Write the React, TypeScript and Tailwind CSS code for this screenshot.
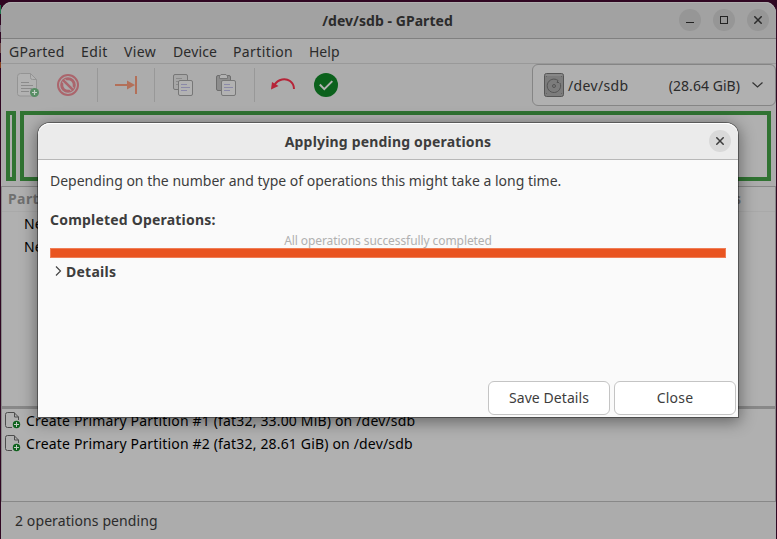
import React from "react";

const menus = [
  { label: "GParted", css: "w-[72px] tracking-[0.25px]" },
  { label: "Edit", css: "w-[43px] tracking-[0.4px]" },
  { label: "View", css: "w-[49px] tracking-[0.4px]" },
  { label: "Device", css: "w-[60px] tracking-[0.15px]" },
  { label: "Partition", css: "w-[76px] tracking-[0.4px]" },
  { label: "Help", css: "w-[40px] tracking-[0px]" },
];

const operations = [
  "Create Primary Partition #1 (fat32, 33.00 MiB) on /dev/sdb",
  "Create Primary Partition #2 (fat32, 28.61 GiB) on /dev/sdb",
];

function NewIcon() {
  return (
    <svg width="24" height="24" viewBox="0 0 24 24" fill="none" className="shrink-0">
      <path d="M3.500.5h10l6 6v14a2.500 2.500 0 0 1-2.500 2.500H3a2.500 2.500 0 0 1-2.500-2.500V3.500A3 3 0 0 1 3.500.5Z" transform="translate(1 0)" fill="#b2b2b2" stroke="#949494" />
      <path d="M14.500.5v4a2 2 0 0 0 2 2h4" stroke="#949494" />
      <path d="M5 9.500h8M5 12.500h12M5 15.500h11M5 18.500h8" stroke="#8b8b8b" />
      <circle cx="18.500" cy="19.500" r="4.500" fill="#578d64" />
      <path d="M18.500 17v5M16 19.500h5" stroke="#c4d0c6" strokeWidth="1.200" />
    </svg>
  );
}

function ForbiddenIcon() {
  return (
    <svg width="22" height="22" viewBox="0 0 22 22" fill="none" className="shrink-0">
      <circle cx="11" cy="11" r="10" stroke="#ab656c" strokeWidth="2" />
      <circle cx="11" cy="11" r="6.300" stroke="#ab656c" strokeWidth="3" />
      <path d="M6.500 6.500l9 9" stroke="#acacac" strokeWidth="4.500" />
      <path d="M5.800 5.800l10.400 10.400" stroke="#ab656c" strokeWidth="2.500" />
    </svg>
  );
}

function MoveIcon() {
  return (
    <svg width="22" height="18" viewBox="0 0 22 18" className="shrink-0" fill="#b37059">
      <path d="M0 8h12V4.500l8 4.500-8 4.500V10H0ZM20 0h2v18h-2Z" />
    </svg>
  );
}

function PageFront() {
  return (
    <>
      <rect x="5.500" y="6.500" width="14" height="15" rx="1.500" fill="#b2b2b2" stroke="#777" />
      <path d="M8 10.500h6M8 13.500h9M8 16.500h6" stroke="#8b89a8" />
    </>
  );
}

function CopyIcon() {
  return (
    <svg width="20" height="22" viewBox="0 0 20 22" fill="none" className="shrink-0">
      <rect x=".5" y=".5" width="14" height="15" rx="1.500" fill="#a7a7a7" stroke="#777" />
      <path d="M3 4.500h6M3 7.500h7M3 10.500h2" stroke="#8b8b8b" />
      <PageFront />
    </svg>
  );
}

function PasteIcon() {
  return (
    <svg width="20" height="22" viewBox="0 0 20 22" fill="none" className="shrink-0">
      <rect x=".5" y="1.500" width="14" height="15" rx="1.500" fill="#8d8d8d" stroke="#6d6d6d" />
      <path d="M3.500 4.500h8V2l-1.500-1.500H5L3.500 2Z" fill="#b2b2b2" stroke="#777" />
      <PageFront />
    </svg>
  );
}

function UndoIcon() {
  return (
    <svg width="24" height="12" viewBox="0 0 24 12" fill="none" className="mb-[3px] shrink-0">
      <path d="M3.500 7C7 .4 15 0 19 3c2.600 1.900 4 4.400 4 8" stroke="#b62438" strokeWidth="2" />
      <path d="M0 11.500l1-7.500 6.500 4Z" fill="#b62438" />
    </svg>
  );
}

function ApplyIcon() {
  return (
    <svg width="24" height="24" viewBox="0 0 24 24" fill="none" className="shrink-0">
      <circle cx="12" cy="12" r="12" fill="#0b611c" />
      <path d="M5.800 11.500l4.500 4.600 8-8" stroke="#b2b2b2" strokeWidth="2" />
    </svg>
  );
}

function DiskIcon() {
  return (
    <svg width="20" height="24" viewBox="0 0 20 24" fill="none" className="shrink-0">
      <rect x=".5" y=".5" width="19" height="23" rx="2" fill="#7c7c7c" stroke="#555" />
      <path d="M1.500 2h17" stroke="#939393" />
      <path d="M14 7.500a6.700 6.700 0 1 0 2 2.500M14 7.500l-1 2h2" stroke="#545454" />
      <circle cx="10" cy="13" r="1.500" stroke="#545454" />
      <path d="M2.500 3v1M17.500 3v1M2.500 20v1M17.500 20v1" stroke="#656565" />
    </svg>
  );
}

function OperationIcon() {
  return (
    <svg width="16" height="17" viewBox="0 0 16 17" fill="none" className="shrink-0">
      <path d="M7 15.500H2.500a2 2 0 0 1-2-2v-11a2 2 0 0 1 2-2H9l4.500 4.500v3" stroke="#4c4c4c" />
      <path d="M9.500.5V5h4" stroke="#4c4c4c" />
      <circle cx="11.500" cy="12.500" r="3.700" fill="#0e621d" />
      <path d="M11.500 10v5M9 12.500h5" stroke="#c2ccc3" />
    </svg>
  );
}

function Separator({ css }: { css: string }) {
  return <div className={`h-[34px] w-px shrink-0 bg-[#989898] ${css}`} />;
}

function CloseGlyph() {
  return (
    <svg width="8" height="8" viewBox="0 0 8 8" stroke="currentColor" strokeWidth="1.500">
      <path d="M.3.3l7.400 7.400M7.700.3L.3 7.700" />
    </svg>
  );
}

function Dialog() {
  return (
    <div className="absolute left-[38px] top-[123px] flex h-[294px] w-[700px] flex-col rounded-t-[12px] bg-[#fafafa] text-[#3d3d3d] shadow-[0_0_0_1px_rgba(0,0,0,0.38),0_3px_16px_2px_rgba(0,0,0,0.42)]">
      <div className="flex h-[37px] shrink-0 items-center rounded-t-[12px] border-b border-[#b8b8b8] bg-[#ebebeb] pr-[7px] shadow-[inset_0_1px_#fff]">
        <h2 className="flex-1 whitespace-nowrap pl-[29px] text-center text-[14px] font-bold tracking-[0.18px]">
          Applying pending operations
        </h2>
        <button className="flex size-[22px] items-center justify-center rounded-full bg-[#d9d9d9]">
          <CloseGlyph />
        </button>
      </div>
      <div className="flex flex-1 flex-col px-[12px]">
        <p className="mt-[11px] h-5 whitespace-nowrap text-[14px] leading-5">
          <span>Depending on the number and type of operations this might take a long time.</span>
        </p>
        <p className="mt-[19px] h-5 whitespace-nowrap text-[14px] font-bold leading-5 tracking-[0.2px]">
          <span>Completed Operations:</span>
        </p>
        <p className="mt-[3px] h-[15px] whitespace-nowrap text-center text-[12px] leading-4 text-[#b0b0b0] tracking-[-0.08px]">
          <span>All operations successfully completed</span>
        </p>
        <div className="h-[10px] border border-[#ef7d55] bg-[#e95420]" />
        <div className="mt-[3px] flex h-5 items-center pl-[5px]">
          <svg width="7" height="10" viewBox="0 0 7 10" fill="none" stroke="#444">
            <path d="M1 .5L5.500 5 1 9.500" strokeWidth="1.200" />
          </svg>
          <span className="ml-[4px] text-[14px] font-bold tracking-[0.25px]">Details</span>
        </div>
      </div>
      <div className="flex justify-end gap-1 pb-[2px] pr-[2px] text-[14px]">
        <button className="h-[34px] w-[122px] rounded-[6px] border border-[#c4c4c4] bg-white pb-[2px]">
          <span className="tracking-[0.08px]">Save Details</span>
        </button>
        <button className="h-[34px] w-[122px] rounded-[6px] border border-[#c4c4c4] bg-white pb-[2px]">
          <span className="tracking-[0.2px]">Close</span>
        </button>
      </div>
    </div>
  );
}

export default function App() {
  return (
    <div className="relative flex h-[539px] w-[777px] overflow-hidden bg-[#300722] pt-[2px] font-['Noto_Sans',sans-serif] text-[14px] text-[#2b2b2b]">
      <div className="flex w-px shrink-0 flex-col">
        <i className="mt-[3px] h-[9px] bg-[#247650]" />
        <i className="mt-[11px] h-[7px] bg-[#77697a]" />
        <i className="mt-[11px] h-[10px] bg-[#74504f]" />
        <i className="mt-[9px] h-[6px] bg-[#8a3f1e]" />
      </div>
      <main className="flex w-[775px] shrink-0 flex-col rounded-t-[11px] bg-[#acacac]">
        <header className="flex h-[37px] shrink-0 items-center gap-[12px] rounded-t-[11px] border-b border-[#808080] bg-[#a2a2a2] pr-[7px] shadow-[inset_0_1px_#b0b0b0]">
          <h1 className="flex-1 whitespace-nowrap pl-[107px] text-center font-bold tracking-[0.05px]">/dev/sdb - GParted</h1>
          <button className="flex size-[22px] items-center justify-center rounded-full bg-[#969696]">
            <span className="mt-[5px] h-px w-2 bg-[#222]" />
          </button>
          <button className="flex size-[22px] items-center justify-center rounded-full bg-[#969696]">
            <span className="size-2 border border-[#222]" />
          </button>
          <button className="flex size-[22px] items-center justify-center rounded-full bg-[#969696]">
            <CloseGlyph />
          </button>
        </header>
        <nav className="flex h-[25px] shrink-0 items-center border-b border-[#999] pl-[8px]">
          {menus.map((m) => (
            <span key={m.label} className={`shrink-0 whitespace-nowrap ${m.css}`}>
              {m.label}
            </span>
          ))}
        </nav>
        <div className="flex h-[42px] shrink-0 items-center pl-[15px]">
          <NewIcon />
          <span className="w-[17px]" />
          <ForbiddenIcon />
          <Separator css="ml-[18px]" />
          <span className="w-[17px]" />
          <MoveIcon />
          <Separator css="ml-[17px]" />
          <span className="w-[18px]" />
          <CopyIcon />
          <span className="w-[23px]" />
          <PasteIcon />
          <Separator css="ml-[18px]" />
          <span className="w-[16px]" />
          <UndoIcon />
          <span className="w-[19px]" />
          <ApplyIcon />
          <div className="ml-auto flex h-[42px] w-[244px] items-center rounded-[6px] border border-[#858585] bg-[#b0b0b0] pl-[11px] pr-[12px]">
            <DiskIcon />
            <span className="ml-[4px] tracking-[0.35px]">/dev/sdb</span>
            <span className="ml-auto mr-[12px] tracking-[0.05px]">(28.64 GiB)</span>
            <svg width="11" height="6" viewBox="0 0 11 6" fill="none" stroke="#333" strokeWidth="1.200">
              <path d="M.5.5l5 4.500 5-4.500" />
            </svg>
          </div>
        </div>
        <div className="mt-[5px] flex h-[70px] shrink-0 gap-[4px] pl-[5px] pr-[5px]">
          <div className="w-[10px] border-4 border-[#307332] bg-[#b0b0b0]" />
          <div className="flex-1 border-4 border-[#307332] bg-[#b0b0b0]" />
        </div>
        <section className="mt-[5px] flex h-[220px] shrink-0 flex-col border-x border-t border-[#888] bg-[#b0b0b0]">
          <div className="flex h-[25px] items-center justify-between border-b border-[#a9a9a9] pb-[2px] pl-[6px] pr-[34px] font-bold text-[#707070]">
            <span className="tracking-[0.4px]">Partition</span>
            <span>Flags</span>
          </div>
          <div className="flex flex-col pl-[22px] text-black">
            <span className="h-[23px] leading-[24px]">New Partition #1</span>
            <span className="h-[23px] leading-[24px]">New Partition #2</span>
          </div>
        </section>
        <section className="flex h-[96px] shrink-0 flex-col border-x border-b border-t-[3px] border-[#888] bg-[#b0b0b0] text-black">
          {operations.map((op) => (
            <div key={op} className="flex h-[23px] shrink-0 items-center pl-[3px]">
              <OperationIcon />
              <span className="ml-[5px] whitespace-nowrap tracking-[0.17px]">{op}</span>
            </div>
          ))}
        </section>
        <footer className="flex flex-1 items-center pl-[14px] tracking-[0.1px]">2 operations pending</footer>
      </main>
      <Dialog />
    </div>
  );
}
